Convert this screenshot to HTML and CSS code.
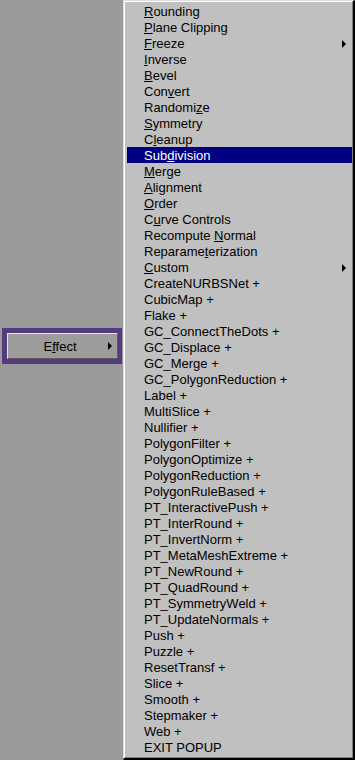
FILE: index.html
```html
<!DOCTYPE html>
<html>
<head>
  <title>Effect Menu</title>
  <link rel="stylesheet" href="styles.css">
</head>
<body>
  <div class="screen">
    <div class="side">
      <div class="effect-frame">
        <div class="effect-btn">
          <span class="effect-label">E<u>f</u>fect</span>
          <span class="arrow"></span>
        </div>
      </div>
    </div>

    <div class="menu">
      <div class="menu-inner">
        <div class="item"><span><u>R</u>ounding</span></div>
        <div class="item"><span><u>P</u>lane Clipping</span></div>
        <div class="item"><span><u>F</u>reeze</span><span class="arrow"></span></div>
        <div class="item"><span><u>I</u>nverse</span></div>
        <div class="item"><span><u>B</u>evel</span></div>
        <div class="item"><span>Con<u>v</u>ert</span></div>
        <div class="item"><span>Randomi<u>z</u>e</span></div>
        <div class="item"><span><u>S</u>ymmetry</span></div>
        <div class="item"><span>C<u>l</u>eanup</span></div>
        <div class="item selected"><span>Sub<u>d</u>ivision</span></div>
        <div class="item"><span><u>M</u>erge</span></div>
        <div class="item"><span><u>A</u>lignment</span></div>
        <div class="item"><span><u>O</u>rder</span></div>
        <div class="item"><span>C<u>u</u>rve Controls</span></div>
        <div class="item"><span>Recompute <u>N</u>ormal</span></div>
        <div class="item"><span>Reparame<u>t</u>erization</span></div>
        <div class="item"><span><u>C</u>ustom</span><span class="arrow"></span></div>
        <div class="item"><span>CreateNURBSNet +</span></div>
        <div class="item"><span>CubicMap +</span></div>
        <div class="item"><span>Flake +</span></div>
        <div class="item"><span>GC_ConnectTheDots +</span></div>
        <div class="item"><span>GC_Displace +</span></div>
        <div class="item"><span>GC_Merge +</span></div>
        <div class="item"><span>GC_PolygonReduction +</span></div>
        <div class="item"><span>Label +</span></div>
        <div class="item"><span>MultiSlice +</span></div>
        <div class="item"><span>Nullifier +</span></div>
        <div class="item"><span>PolygonFilter +</span></div>
        <div class="item"><span>PolygonOptimize +</span></div>
        <div class="item"><span>PolygonReduction +</span></div>
        <div class="item"><span>PolygonRuleBased +</span></div>
        <div class="item"><span>PT_InteractivePush +</span></div>
        <div class="item"><span>PT_InterRound +</span></div>
        <div class="item"><span>PT_InvertNorm +</span></div>
        <div class="item"><span>PT_MetaMeshExtreme +</span></div>
        <div class="item"><span>PT_NewRound +</span></div>
        <div class="item"><span>PT_QuadRound +</span></div>
        <div class="item"><span>PT_SymmetryWeld +</span></div>
        <div class="item"><span>PT_UpdateNormals +</span></div>
        <div class="item"><span>Push +</span></div>
        <div class="item"><span>Puzzle +</span></div>
        <div class="item"><span>ResetTransf +</span></div>
        <div class="item"><span>Slice +</span></div>
        <div class="item"><span>Smooth +</span></div>
        <div class="item"><span>Stepmaker +</span></div>
        <div class="item"><span>Web +</span></div>
        <div class="item"><span>EXIT POPUP</span></div>
      </div>
    </div>
  </div>
</body>
</html>
```

FILE: styles.css
```css
* {
  margin: 0;
  padding: 0;
  box-sizing: border-box;
}

html, body {
  width: 100%;
  height: 100%;
  overflow: hidden;
}

body {
  font-family: 'Liberation Sans', Arial, sans-serif;
  font-size: 13px;
  background-color: #9a9a9a;
  color: #000000;
}

.screen {
  display: flex;
  height: 760px;
}

/* Left area with the popup trigger */
.side {
  width: 123px;
  flex-shrink: 0;
  padding-top: 328px;
  padding-left: 2px;
}

.effect-frame {
  width: 120px;
  height: 36px;
  background: #563a7e;
  padding: 5px 4px 5px 5px;
}

.effect-btn {
  height: 100%;
  display: flex;
  align-items: center;
  background: #9c9c9c;
  border-top: 1px solid #e6e6e6;
  border-left: 1px solid #e6e6e6;
  border-right: 1px solid #5a5a5a;
  border-bottom: 1px solid #5a5a5a;
}

.effect-label {
  flex: 1;
  text-align: center;
  line-height: 16px;
  padding-top: 2px;
  padding-left: 8px;
}

.effect-btn .arrow {
  margin-right: 5px;
  margin-left: 4px;
}

.arrow {
  width: 0;
  height: 0;
  border-top: 4px solid transparent;
  border-bottom: 4px solid transparent;
  border-left: 4px solid #000000;
}

/* Popup menu */
.menu {
  width: 232px;
  flex-shrink: 0;
  height: 760px;
  background: #c0c0c0;
  border-top: 1px solid #dfdfdf;
  border-left: 1px solid #dfdfdf;
  border-right: 2px solid #000000;
  border-bottom: 2px solid #000000;
}

.menu-inner {
  height: 100%;
  border-top: 1px solid #ffffff;
  border-left: 1px solid #ffffff;
  border-right: 1px solid #808080;
  border-bottom: 1px solid #808080;
  padding: 1px 0 0 2px;
}

.item {
  display: flex;
  align-items: flex-start;
  justify-content: space-between;
  height: 16px;
  line-height: 16px;
  padding-top: 1px;
  padding-left: 17px;
  padding-right: 6px;
  white-space: nowrap;
  overflow: visible;
}

.item .arrow {
  align-self: center;
}

.item.selected {
  background: #000080;
  color: #ffffff;
}
```
